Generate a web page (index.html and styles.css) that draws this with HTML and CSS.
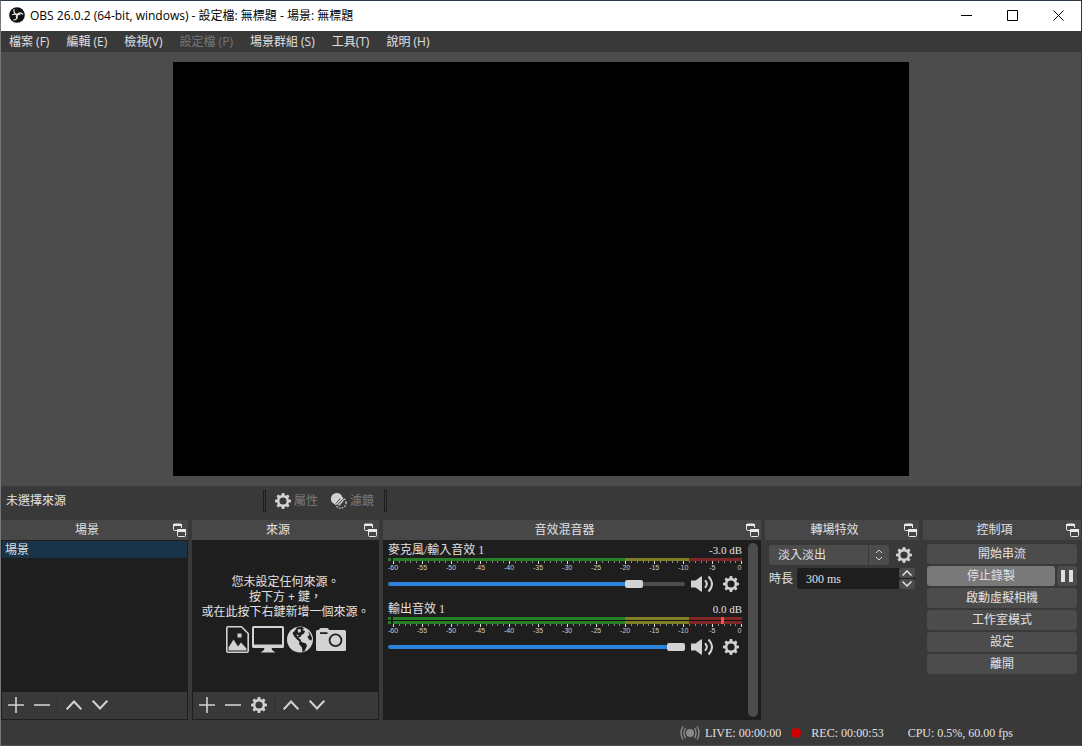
FILE: index.html
```html
<!DOCTYPE html>
<html lang="zh-Hant">
<head>
<meta charset="utf-8">
<meta name="viewport" content="width=device-width, initial-scale=1">
<title>OBS 26.0.2</title>
<link rel="stylesheet" href="styles.css">
</head>
<body>
<svg class="defs" aria-hidden="true">
  <symbol id="gear" viewBox="0 0 16 16"><path fill="currentColor" fill-rule="evenodd" d="M6.8 0h2.4l.4 2.1 1.4.6L12.800 1.500l1.700 1.700-1.200 1.800.6 1.400 2.100.4v2.400l-2.100.4-.6 1.400 1.200 1.800-1.700 1.700-1.800-1.200-1.400.6L9.200 16H6.800l-.4-2.100-1.400-.6-1.800 1.200-1.700-1.700 1.200-1.800-.6-1.400L0 9.200V6.800l2.100-.4.6-1.400L1.500 3.200l1.700-1.700L5 2.700l1.400-.6zM8 4.400a3.600 3.600 0 1 0 0 7.200 3.600 3.600 0 0 0 0-7.200z"/></symbol>
  <symbol id="float" viewBox="0 0 14 14"><path fill="none" stroke="currentColor" d="M4 7.500H1.500Q.5 7.500 .5 6.500V2Q.5 1 1.500 1H7.500Q8.500 1 8.500 2V5M4.500 6.500H12.500V12.500Q12.500 13.500 11.500 13.500H5.500Q4.500 13.500 4.500 12.500Z"/><path fill="currentColor" d="M0 1h9v2H0zM4 6h9v3H4z"/></symbol>
  <symbol id="plus" viewBox="0 0 16 16"><path stroke="currentColor" stroke-width="1.600" d="M0 8H16M8 0V16"/></symbol>
  <symbol id="minus" viewBox="0 0 16 16"><path stroke="currentColor" stroke-width="1.600" d="M0 8H16"/></symbol>
  <symbol id="up" viewBox="0 0 16 16"><path fill="none" stroke="currentColor" stroke-width="2" d="M.7 12.300 8 4.500l7.300 7.800"/></symbol>
  <symbol id="down" viewBox="0 0 16 16"><path fill="none" stroke="currentColor" stroke-width="2" d="M.7 3.700 8 11.500l7.300-7.800"/></symbol>
  <symbol id="speaker" viewBox="0 0 22 18"><path fill="currentColor" d="M0 5.500h4.500L10 1.500q1-.6 1 .5v14q0 1-1 .4L4.500 12.500H0z"/><path fill="none" stroke="currentColor" stroke-width="2" d="M14 5.200q3.600 3.800 0 7.600M17.500 1.500q7 7.500 0 15"/></symbol>
</svg>

<div class="window">
  <header class="titlebar">
    <svg class="logo" viewBox="0 0 16 16"><circle cx="8" cy="8" r="7.800" fill="#111"/><g fill="none" stroke="#eee" stroke-width="1.200"><path d="M5.200 2.200Q3.800 6.400 8.200 7.600Q10.200 8.200 11.600 6.600"/><path d="M14 7.500Q11 4.300 8 7.600Q6.700 9.400 7.600 11.300" /><path d="M4.200 13Q8.800 13 8.200 8.600Q7.200 6.400 3 7.800"/></g></svg>
    <span class="title">OBS 26.0.2 (64-bit, windows) - 設定檔: 無標題 - 場景: 無標題</span>
    <button class="winbtn" aria-label="最小化"><svg viewBox="0 0 11 11"><path stroke="#000" d="M0 5.500H11"/></svg></button>
    <button class="winbtn" aria-label="最大化"><svg viewBox="0 0 11 11"><path fill="none" stroke="#000" d="M.5 .5H10.500V10.500H.5z"/></svg></button>
    <button class="winbtn" aria-label="關閉"><svg viewBox="0 0 11 11"><path stroke="#000" d="M.5 .5 10.500 10.500M10.500 .5 .5 10.500"/></svg></button>
  </header>

  <nav class="menubar">
    <button>檔案 (F)</button>
    <button>編輯 (E)</button>
    <button>檢視(V)</button>
    <button disabled>設定檔 (P)</button>
    <button>場景群組 (S)</button>
    <button>工具(T)</button>
    <button>說明 (H)</button>
  </nav>

  <main class="preview"><div class="stage"><div class="canvas"></div></div></main>

  <section class="context">
    <span class="context-name">未選擇來源</span>
    <i class="handle"></i>
    <button class="tool" disabled><svg class="i16"><use href="#gear"/></svg>屬性</button>
    <button class="tool" disabled><svg class="i16" viewBox="0 0 16 16"><circle cx="9.800" cy="9.800" r="5.300" fill="none" stroke="#d2d2d2" stroke-width="1.300" stroke-dasharray="1.500 1.300"/><path fill="#d2d2d2" d="M5.800 0a5.600 5.600 0 0 1 5.500 4.500L13 7 9 13 5.500 11.500A5.700 5.700 0 0 1 5.800 0z"/><path stroke="#3a393a" stroke-width="1" d="M4.800 10.500 9.500 5.500M6.500 12 11.500 6.500M8.500 13 13 8.500"/></svg>濾鏡</button>
    <i class="handle"></i>
  </section>

  <div class="docks">
    <section class="dock">
      <div class="dock-head"><h2>場景</h2><button aria-label="浮動"><svg class="i14"><use href="#float"/></svg></button></div>
      <div class="panel">
        <ul class="list"><li class="selected">場景</li></ul>
        <div class="bar">
          <button aria-label="新增"><svg class="i16"><use href="#plus"/></svg></button>
          <button aria-label="移除"><svg class="i16"><use href="#minus"/></svg></button>
          <i class="sep"></i>
          <button aria-label="上移"><svg class="i16"><use href="#up"/></svg></button>
          <button aria-label="下移"><svg class="i16"><use href="#down"/></svg></button>
        </div>
      </div>
    </section>

    <section class="dock">
      <div class="dock-head"><h2>來源</h2><button aria-label="浮動"><svg class="i14"><use href="#float"/></svg></button></div>
      <div class="panel">
        <div class="empty">
          <p>您未設定任何來源。<br>按下方 + 鍵，<br>或在此按下右鍵新增一個來源。</p>
          <div class="kinds">
            <svg width="23" height="27" viewBox="0 0 23 27"><path fill="none" stroke="currentColor" stroke-width="1.600" d="M2 .8H15.500L22.200 7.500V25Q22.200 26.200 21 26.200H2Q.8 26.200 .8 25V2Q.8 .8 2 .8z"/><path fill="currentColor" d="M11.500 7.500h4v4h-4zM2.500 24.500V21.500L7.500 13.500 12 20.500 15 16.500 20.500 22.500V24.500z"/></svg>
            <svg width="32" height="27" viewBox="0 0 32 27"><path fill="currentColor" fill-rule="evenodd" d="M1.500 0h29Q32 0 32 1.500V20.500Q32 22 30.500 22H19.500L20.500 24.500 23.500 26.500H8.500L11.500 24.500 12.500 22H1.500Q0 22 0 20.500V1.500Q0 0 1.500 0zM2 2V18.500H30V2z"/></svg>
            <svg width="26" height="27" viewBox="0 0 26 27"><circle cx="13" cy="13.500" r="13" fill="currentColor"/><path fill="#1f1e1f" d="M10 1.200 15 1 17 2.500 15.500 4 18 5 17 7.500 14.500 9 13.500 11 11 11.500 13.500 13.500 14.500 16 19 17.500 20 20 17.500 25 15.500 26 15 21.500 12 18 12.500 15.500 9.500 13 7 10 5.500 7 8 4.500zM21 5 23 7.500 25 12 24.500 14.500 22 13.500 20.500 10.500 22.500 9z"/><path fill="currentColor" d="M10.500 3.500 13.500 3 14 5.500 11.500 7zM9.500 8.500 12 9 10.500 10.500z"/></svg>
            <svg width="30" height="23" viewBox="0 0 30 23"><path fill="currentColor" fill-rule="evenodd" d="M1.500 2H3Q3.500 0 5 0H11Q12.500 0 13 2H28.500Q30 2 30 3.500V21.500Q30 23 28.500 23H1.500Q0 23 0 21.500V3.500Q0 2 1.500 2zM4 4.300V6H11.500V4.300zM19.500 5.500a6.800 6.800 0 1 0 0 13.600 6.800 6.800 0 0 0 0-13.600z"/><circle cx="19.500" cy="12.300" r="5" fill="currentColor"/></svg>
          </div>
        </div>
        <div class="bar">
          <button aria-label="新增"><svg class="i16"><use href="#plus"/></svg></button>
          <button aria-label="移除"><svg class="i16"><use href="#minus"/></svg></button>
          <button aria-label="屬性"><svg class="i16"><use href="#gear"/></svg></button>
          <i class="sep"></i>
          <button aria-label="上移"><svg class="i16"><use href="#up"/></svg></button>
          <button aria-label="下移"><svg class="i16"><use href="#down"/></svg></button>
        </div>
      </div>
    </section>

    <section class="dock">
      <div class="dock-head"><h2>音效混音器</h2><button aria-label="浮動"><svg class="i14"><use href="#float"/></svg></button></div>
      <div class="panel mixer">
        <div class="channels">
          <div class="channel">
            <div class="channel-head"><label for="mic">麥克風/輸入音效 1</label><span class="db">-3.0 dB</span></div>
            <div class="meter"></div>
            <svg class="scale"></svg>
            <div class="volume">
              <input id="mic" type="range" min="0" max="100" value="85" style="--level:85%">
              <button aria-label="靜音"><svg width="22" height="18"><use href="#speaker"/></svg></button>
              <button aria-label="設定"><svg class="i16"><use href="#gear"/></svg></button>
            </div>
          </div>
          <div class="channel">
            <div class="channel-head"><label for="out">輸出音效 1</label><span class="db">0.0 dB</span></div>
            <div class="meters peak"><div class="meter"></div><div class="meter"></div></div>
            <svg class="scale"></svg>
            <div class="volume">
              <input id="out" type="range" min="0" max="100" value="100" style="--level:100%">
              <button aria-label="靜音"><svg width="22" height="18"><use href="#speaker"/></svg></button>
              <button aria-label="設定"><svg class="i16"><use href="#gear"/></svg></button>
            </div>
          </div>
        </div>
        <i class="scrollbar"></i>
      </div>
    </section>

    <section class="dock">
      <div class="dock-head"><h2>轉場特效</h2><button aria-label="浮動"><svg class="i14"><use href="#float"/></svg></button></div>
      <div class="form">
        <div class="row">
          <div class="combo">
            <select aria-label="轉場特效"><option>淡入淡出</option></select>
            <svg width="8" height="12" viewBox="0 0 8 12"><path fill="none" stroke="#d2d2d2" d="M1 4 4 1l3 3M1 8l3 3 3-3"/></svg>
          </div>
          <button class="plain" aria-label="設定"><svg class="i16"><use href="#gear"/></svg></button>
        </div>
        <div class="row tight">
          <label for="duration">時長</label>
          <div class="spin">
            <input id="duration" type="text" value="300 ms">
            <div class="steps">
              <button aria-label="增加"><svg width="10" height="6" viewBox="0 0 10 6"><path fill="none" stroke="currentColor" stroke-width="1.500" d="M.5 5.500 5 1l4.500 4.500"/></svg></button>
              <button aria-label="減少"><svg width="10" height="6" viewBox="0 0 10 6"><path fill="none" stroke="currentColor" stroke-width="1.500" d="M.5 .5 5 5 9.500 .5"/></svg></button>
            </div>
          </div>
        </div>
      </div>
    </section>

    <section class="dock">
      <div class="dock-head"><h2>控制項</h2><button aria-label="浮動"><svg class="i14"><use href="#float"/></svg></button></div>
      <div class="controls">
        <button>開始串流</button>
        <div class="record"><button class="active">停止錄製</button><button class="pause" aria-label="暫停"><svg width="12" height="12" viewBox="0 0 12 12"><path fill="currentColor" d="M0 0h4v12H0zM8 0h4v12H8z"/></svg></button></div>
        <button>啟動虛擬相機</button>
        <button>工作室模式</button>
        <button>設定</button>
        <button>離開</button>
      </div>
    </section>
  </div>

  <footer class="status">
    <span class="live"><svg width="20" height="14" viewBox="0 0 20 14"><circle cx="10" cy="7" r="4" fill="#8a8a8a"/><path fill="none" stroke="#8a8a8a" stroke-width="1.400" d="M5.500 2Q2.500 7 5.500 12M14.500 2Q17.500 7 14.500 12M3 .5Q-1 7 3 13.500M17 .5Q21 7 17 13.500"/></svg>LIVE: 00:00:00</span>
    <span class="rec"><i class="dot"></i>REC: 00:00:53</span>
    <span>CPU: 0.5%, 60.00 fps</span>
  </footer>
</div>
<script src="scale.js"></script>
</body>
</html>
```

FILE: styles.css
```css
* { box-sizing: border-box; }

:root {
  --bg: #3a393a;
  --dark: #1f1e1f;
  --mid: #4c4c4c;
  --text: #e1e0e1;
  --icon: #d2d2d2;
  --sans: "Open Sans", "Noto Sans CJK TC", sans-serif;
  --serif: "Liberation Serif", "Noto Sans CJK TC", serif;
}

body {
  margin: 0;
  background: var(--bg);
  color: var(--text);
  font: 12px/16px var(--sans);
}

button, input, select { font: inherit; color: inherit; }
button { padding: 0; border: 0; background: none; }
h2, p, ul { margin: 0; padding: 0; font-size: inherit; font-weight: 400; }
svg { flex: none; display: block; }
.defs { display: none; }
.i16 { width: 16px; height: 16px; color: var(--icon); }
.i14 { width: 14px; height: 14px; color: #e6ebe9; }

.window {
  display: flex;
  flex-direction: column;
  min-height: 100vh;
  border: 1px solid #2c3a48;
  border-left-color: #777;
  border-bottom-color: #505050;
}

.titlebar {
  display: flex;
  align-items: stretch;
  height: 30px;
  background: #fff;
  color: #000;
}
.logo { width: 16px; height: 16px; margin: 6px 5px 0 8px; }
.title { flex: 1; line-height: 30px; white-space: nowrap; }
.winbtn { display: grid; place-items: center; width: 46px; height: 28px; }
.winbtn svg { width: 11px; height: 11px; }

.menubar { display: flex; gap: 1px; height: 21px; }
.menubar button { padding: 0 8px; white-space: nowrap; }
.menubar button:disabled { color: #777; }

.preview {
  flex: 1;
  display: flex;
  min-height: 200px;
  padding: 10px;
  background: var(--mid);
}
.stage { flex: 1; display: grid; place-items: center; container-type: size; }
.canvas { width: min(100cqw, 100cqh * 16 / 9); aspect-ratio: 16 / 9; background: #000; }

.context { display: flex; align-items: center; height: 30px; margin-bottom: 4px; }
.context-name { width: 262px; padding-left: 5px; }
.handle { width: 3px; height: 22px; border: 1px solid var(--dark); }
.tool { display: flex; align-items: center; gap: 3px; margin-left: 13px; }
.tool:disabled { color: #7a797a; }
.handle + .tool { margin-left: 9px; }
.tool + .handle { margin-left: 10px; }

.docks {
  display: grid;
  grid-template-columns: 187fr 187fr 378fr 154fr 158fr;
  gap: 4px;
  min-height: 200px;
}
.dock { display: flex; flex-direction: column; min-width: 0; font-family: var(--serif); }
.dock-head { display: flex; align-items: center; height: 20px; padding-right: 1px; background: #474747; }
.dock-head h2 { flex: 1; text-align: center; }
.panel { flex: 1; display: flex; flex-direction: column; border: 1px solid var(--dark); background: var(--dark); }

.list { flex: 1; list-style: none; }
.list li { height: 17px; padding-left: 3px; line-height: 18px; }
.selected { background: #193449; }

.bar { display: flex; height: 27px; padding-left: 1px; background: var(--bg); }
.bar button { display: grid; place-items: center; width: 26px; height: 26px; }
.sep { width: 1px; height: 18px; margin: 4px 3px 0 2px; background: #313031; }

.empty {
  flex: 1;
  display: flex;
  flex-direction: column;
  align-items: center;
  justify-content: center;
  gap: 7px;
  padding-bottom: 6px;
  font: 12px/15px var(--sans);
  text-align: center;
  white-space: nowrap;
}
.kinds { display: flex; align-items: center; gap: 3px; color: var(--icon); }

.mixer { flex-direction: row; gap: 6px; padding: 0 2px 0 4px; }
.channels { flex: 1; display: flex; flex-direction: column; gap: 4px; min-width: 0; }
.channel-head { display: flex; justify-content: space-between; height: 17px; line-height: 18px; }
.db { font-size: 11px; }
.meter {
  height: 3px;
  background: linear-gradient(90deg, #267f26 3px, var(--dark) 3px, var(--dark) 5px, #267f26 5px, #267f26 67%, #7f7f26 67%, #7f7f26 85%, #7f2626 85%);
}
.meters { position: relative; display: grid; gap: 1px; background: #111; }
.peak::after { content: ""; position: absolute; top: 0; bottom: 0; left: 94%; width: 3px; background: #ff4c4c; }
.scale { width: 100%; height: 11px; overflow: visible; }
.scale rect { fill: #ddd; shape-rendering: crispEdges; }
.scale .minor { fill: #888; }
.scale text { fill: #ccc; font: 7px "Liberation Sans", sans-serif; text-anchor: middle; }
.scale text.last { text-anchor: end; }
.volume { display: flex; align-items: center; height: 24px; padding-right: 3px; }
.volume input { flex: 1; min-width: 0; height: 10px; margin: 0 6px 0 0; appearance: none; background: none; }
.volume input::-webkit-slider-runnable-track {
  height: 4px;
  border-radius: 2px;
  background: linear-gradient(90deg, #2a82da var(--level), var(--mid) var(--level));
}
.volume input::-webkit-slider-thumb {
  appearance: none;
  width: 18px;
  height: 8px;
  margin-top: -2px;
  border-radius: 2px;
  background: var(--icon);
}
.volume button + button { margin-left: 10px; }
.volume svg { color: var(--icon); }
.scrollbar { width: 10px; margin: 2px 0; border-radius: 5px; background: var(--mid); }

.form { display: grid; grid-template-columns: minmax(0, 1fr); gap: 3px; padding: 5px 4px; }
.row { display: flex; align-items: center; gap: 7px; padding-right: 3px; }
.tight { gap: 4px; padding-right: 0; }
.tight label { flex: none; }
.combo { position: relative; flex: 1; min-width: 0; }
.combo select {
  display: block;
  width: 100%;
  height: 20px;
  padding: 0 9px;
  border: 0;
  border-radius: 3px;
  appearance: none;
  background: linear-gradient(90deg, transparent calc(100% - 21px), var(--bg) calc(100% - 21px), var(--bg) calc(100% - 20px), transparent calc(100% - 20px)) var(--mid);
}
.combo svg { position: absolute; right: 6px; top: 4px; pointer-events: none; }
.spin { flex: 1; display: flex; min-width: 0; height: 21px; border-radius: 3px; background: var(--dark); }
.spin input { flex: 1; min-width: 0; padding: 0 9px; border: 0; background: none; }
.steps { display: grid; gap: 1px; width: 16px; }
.steps button { display: grid; place-items: center; border-radius: 2px; background: var(--mid); }

.controls { display: grid; gap: 2px; padding: 4px; }
.controls button { height: 20px; border-radius: 3px; background: var(--mid); }
.record { display: flex; gap: 2px; }
.controls .record .active { flex: 1; background: #7a797a; }
.pause { display: grid; place-items: center; width: 20px; }

.status {
  display: flex;
  align-items: center;
  justify-content: flex-end;
  gap: 24px;
  height: 25px;
  padding-right: 68px;
  font-family: var(--serif);
}
.live, .rec { display: flex; align-items: center; gap: 5px; }
.live { margin-right: -14px; }
.rec { gap: 10px; }
.dot { width: 10px; height: 10px; border-radius: 50%; background: #d00000; }
```

FILE: scale.js
```js
// Draws the decibel scale (-60 to 0) under each meter.
const NS = "http://www.w3.org/2000/svg";
const START = 1.4;
const SPAN = 98.4;

document.querySelectorAll(".scale").forEach((scale) => {
  for (let db = -60; db <= 0; db++) {
    const x = START + ((db + 60) / 60) * SPAN;
    const major = db % 5 === 0;
    const tick = document.createElementNS(NS, "rect");
    tick.setAttribute("x", x + "%");
    tick.setAttribute("width", 1);
    tick.setAttribute("height", major ? 3 : 2);
    if (!major) tick.setAttribute("class", "minor");
    scale.append(tick);
    if (major) {
      const label = document.createElementNS(NS, "text");
      label.setAttribute("x", x + "%");
      label.setAttribute("y", 9);
      if (db === 0) label.setAttribute("class", "last");
      label.textContent = db;
      scale.append(label);
    }
  }
});
```
